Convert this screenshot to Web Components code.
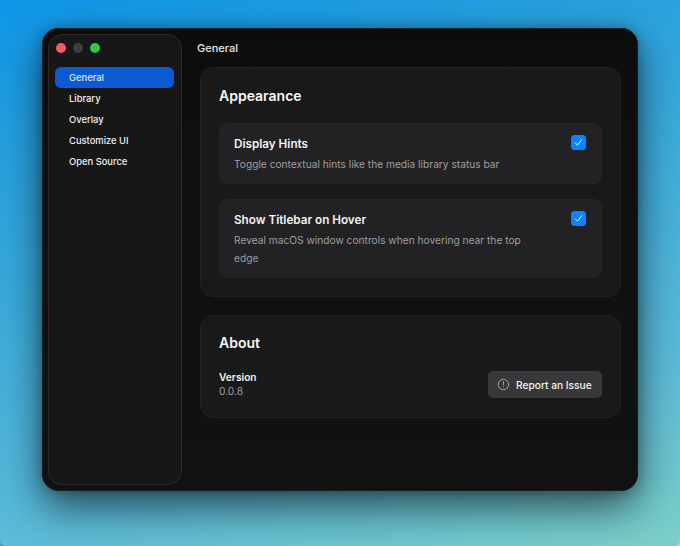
<!DOCTYPE html>
<html>
<head>
<meta charset="utf-8">
<style>
html { background: linear-gradient(90deg, #3f93a8 0%, #3f93a8 50%, #b5dedb 50%, #b5dedb 100%); }
html, body { margin: 0; height: 546px; overflow: hidden; }
body {
    background: linear-gradient(165deg, #0f96e8 0%, #2aa2dd 25%, #5cbbd8 75%, #7ccfc8 100%);
    border-radius: 0 0 5px 5px;
    font-family: Inter, "Liberation Sans", sans-serif;
    color: #f2f2f3;
    padding: 28px 42px 55px 42px;
    box-sizing: border-box;
}
</style>
</head>
<body>
<app-window>
    <side-bar slot="side">
        <nav-item active>General</nav-item>
        <nav-item>Library</nav-item>
        <nav-item>Overlay</nav-item>
        <nav-item>Customize UI</nav-item>
        <nav-item>Open Source</nav-item>
    </side-bar>
    <settings-card heading="Appearance">
        <setting-row label="Display Hints">Toggle contextual hints like the media library status bar</setting-row>
        <setting-row label="Show Titlebar on Hover">Reveal macOS window controls when hovering near the top edge</setting-row>
    </settings-card>
    <settings-card heading="About" compact>
        <about-row version="0.0.8"></about-row>
    </settings-card>
</app-window>
<script>
class AppWindow extends HTMLElement {
    constructor() {
        super()
        this.attachShadow({mode: 'open'}).innerHTML = `
<style>
:host {
    display: flex;
    height: 463px;
    box-sizing: border-box;
    padding: 6px 0 6px 6px;
    background: linear-gradient(180deg, #0c0c0d 0%, #101011 30%, #111112 100%);
    border-radius: 17px;
    box-shadow: inset 0 0 0 1px #1a1c1e, 0 16px 40px rgba(0,0,0,.6), 0 0 12px rgba(0,0,0,.25);
}
main { flex: 1; min-width: 0; padding: 0 17px 0 18px; }
h1 { margin: 0 0 0 -3px; padding: 7px 0 0 0; height: 33px; box-sizing: border-box; font-size: 11px; line-height: 14px; font-weight: 500; color: #e8e8e9; }
.cards { display: flex; flex-direction: column; gap: 18px; }
</style>
<slot name="side"></slot>
<main>
    <h1>General</h1>
    <div class="cards"><slot></slot></div>
</main>`
    }
}

class SideBar extends HTMLElement {
    constructor() {
        super()
        this.attachShadow({mode: 'open'}).innerHTML = `
<style>
:host {
    display: flex;
    flex-direction: column;
    flex: none;
    width: 134px;
    box-sizing: border-box;
    padding: 0 7px 0 6px;
    background: #171718;
    border: 1px solid #2a2a2c;
    border-radius: 14px;
}
.lights { display: flex; gap: 7px; padding: 8px 0 0 1px; height: 32px; box-sizing: border-box; }
.lights i { width: 10px; height: 10px; border-radius: 50%; }
</style>
<div class="lights">
    <i style="background:#fb5a5f"></i>
    <i style="background:#3d3d3f"></i>
    <i style="background:#2fc84f"></i>
</div>
<slot></slot>`
    }
}

class NavItem extends HTMLElement {
    constructor() {
        super()
        this.attachShadow({mode: 'open'}).innerHTML = `
<style>
:host {
    display: flex;
    align-items: center;
    height: 21px;
    padding-left: 14px;
    border-radius: 6px;
    font-size: 9.4px;
    font-weight: 500;
    color: #f0f0f1;
}
:host([active]) { background: #0b59d3; color: #dde9fb; }
</style>
<slot></slot>`
    }
}

class SettingsCard extends HTMLElement {
    constructor() {
        super()
        this.attachShadow({mode: 'open'}).innerHTML = `
<style>
:host {
    display: block;
    box-sizing: border-box;
    padding: 0 18px 18px;
    background: #19191a;
    border: 1px solid #212123;
    border-radius: 13px;
}
h2 { margin: 0; padding: 19px 0 18px; font-size: 14px; line-height: 18px; font-weight: 600; color: #f7f7f8; }
:host([compact]) h2 { padding: 18px 0 19px; }
.body { display: flex; flex-direction: column; gap: 15px; }
</style>
<h2></h2>
<div class="body"><slot></slot></div>`
    }

    static get observedAttributes() {
        return ['heading']
    }

    attributeChangedCallback(property, oldValue, newValue) {
        this.shadowRoot.querySelector('h2').textContent = newValue
    }
}

class SettingRow extends HTMLElement {
    constructor() {
        super()
        this.attachShadow({mode: 'open'}).innerHTML = `
<style>
:host {
    display: flex;
    justify-content: space-between;
    box-sizing: border-box;
    padding: 12px 15px 10px 14px;
    background: #222224;
    border: 1px solid #252527;
    border-radius: 9px;
}
.text { width: 300px; }
.label { font-size: 11.7px; line-height: 16px; font-weight: 600; color: #f3f3f4; margin-bottom: 3px; }
.desc { font-size: 10.2px; line-height: 18px; color: #9f9fa2; }
.check { flex: none; width: 15px; height: 15px; margin-top: -1px; border-radius: 3.5px; background: #0a84ff; display: flex; align-items: center; justify-content: center; }
</style>
<div class="text">
    <div class="label"></div>
    <div class="desc"><slot></slot></div>
</div>
<div class="check">
    <svg width="11" height="11" viewBox="0 0 11 11" fill="none" stroke="#eaf4ff" stroke-width="1" stroke-linecap="round" stroke-linejoin="round"><path d="M2.2 5.8 L4.4 8.2 L8.8 2.6"/></svg>
</div>`
    }

    connectedCallback() {
        this.shadowRoot.querySelector('.label').textContent = this.getAttribute('label')
    }
}

class AboutRow extends HTMLElement {
    constructor() {
        super()
        this.attachShadow({mode: 'open'}).innerHTML = `
<style>
:host { display: flex; justify-content: space-between; align-items: center; margin-top: -1px; }
.name { font-size: 10.2px; line-height: 14px; font-weight: 600; color: #f2f2f3; }
.ver { font-size: 10.2px; line-height: 15px; color: #9f9fa2; }
button {
    display: flex; align-items: center; gap: 6px;
    height: 27px; width: 114px; padding: 0 0 0 9px; box-sizing: border-box;
    border: 0; border-radius: 5px; background: #38383a; color: #f1f1f2;
    font: 500 10.2px Inter, "Liberation Sans", sans-serif;
}
</style>
<div class="info">
    <div class="name">Version</div>
    <div class="ver"></div>
</div>
<button>
    <svg width="13" height="13" viewBox="0 0 13 13" fill="none" stroke="#a5a5a8" stroke-width="1" stroke-linecap="round"><circle cx="6.5" cy="6.5" r="5.2"/><path d="M6.5 3.8 V7"/><path d="M6.5 9 V9.1"/></svg>
    Report an Issue
</button>`
    }

    connectedCallback() {
        this.shadowRoot.querySelector('.ver').textContent = this.getAttribute('version')
    }
}

customElements.define('app-window', AppWindow)
customElements.define('side-bar', SideBar)
customElements.define('nav-item', NavItem)
customElements.define('settings-card', SettingsCard)
customElements.define('setting-row', SettingRow)
customElements.define('about-row', AboutRow)
</script>
</body>
</html>
